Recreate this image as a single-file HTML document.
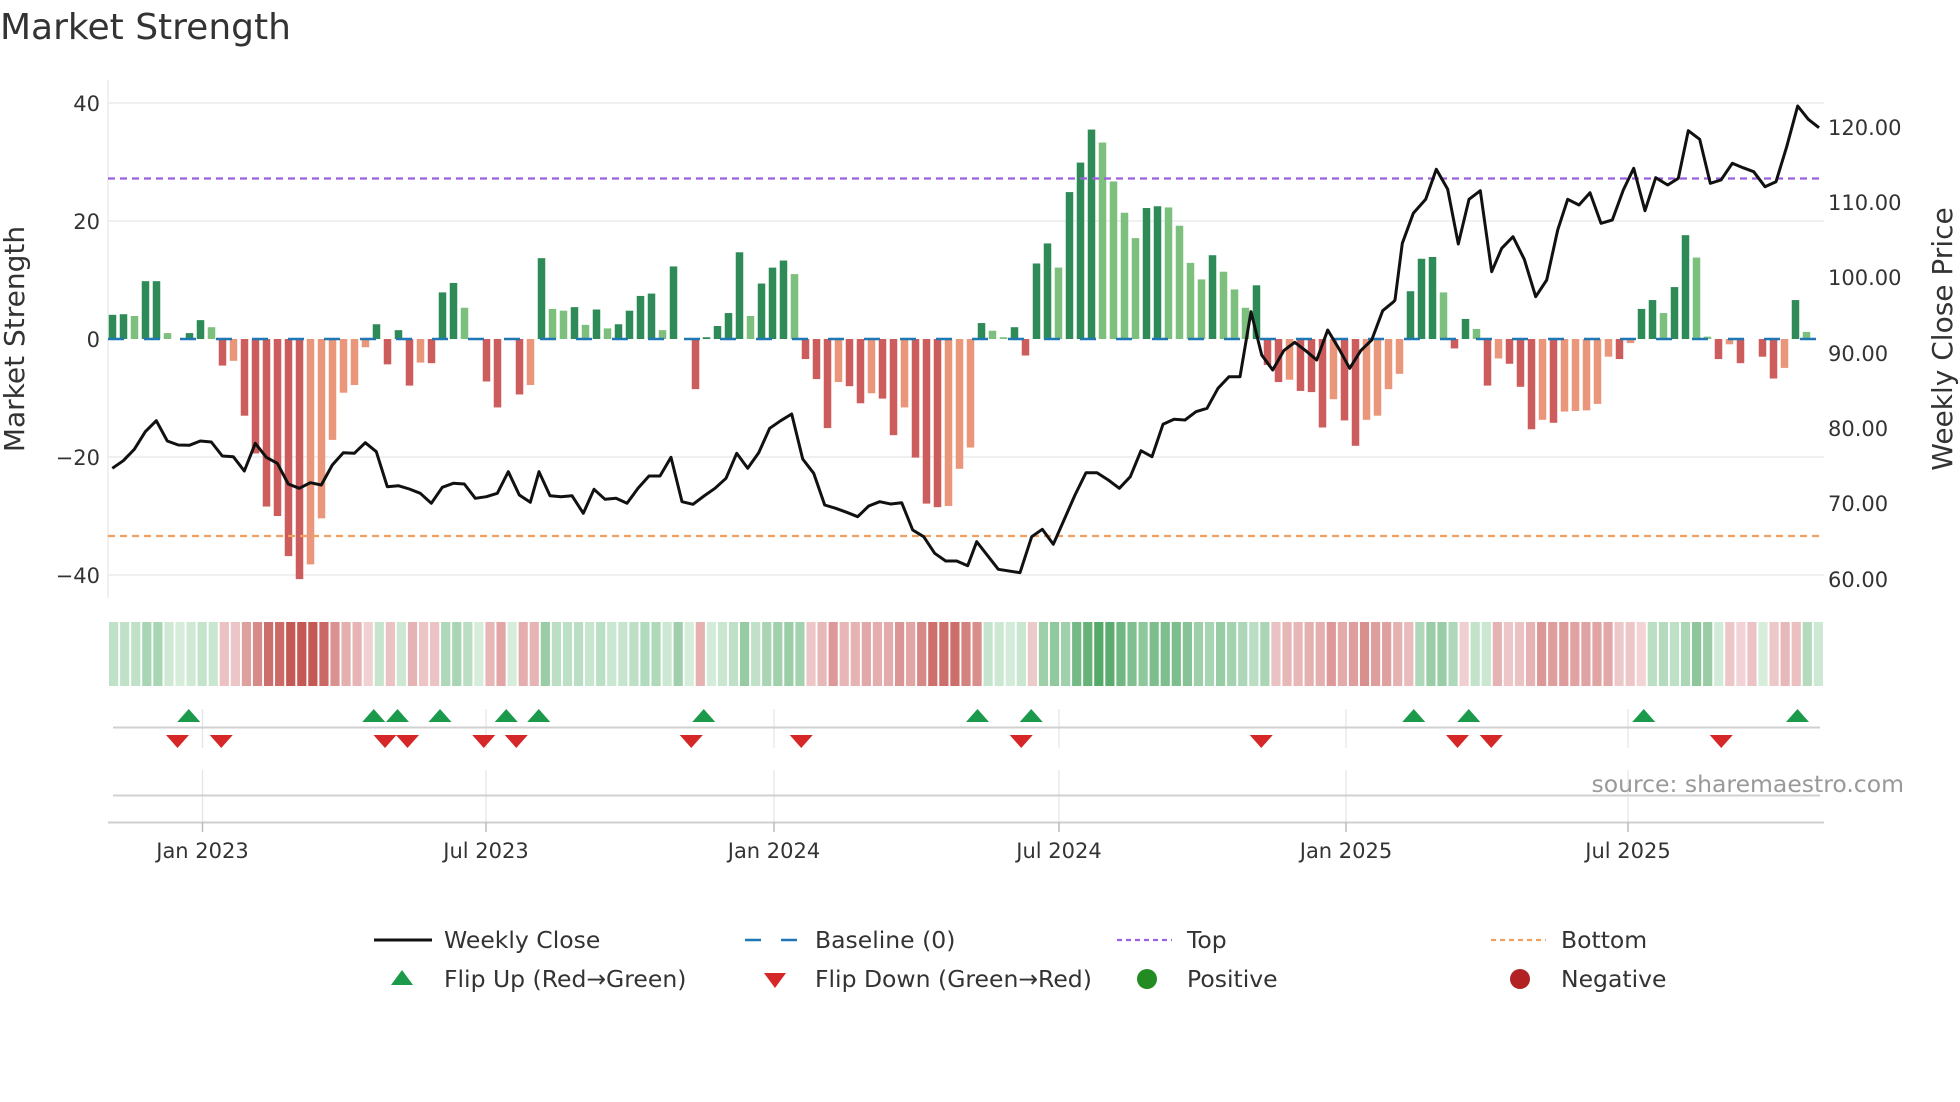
<!DOCTYPE html>
<html><head><meta charset="utf-8">
<style>
html,body{margin:0;padding:0;background:#fff;}
svg{display:block;font-family:"DejaVu Sans","Liberation Sans",sans-serif;}
</style></head>
<body>
<svg id="s" width="1960" height="1102" viewBox="0 0 1960 1102" xmlns="http://www.w3.org/2000/svg">
<rect width="1960" height="1102" fill="#fff"/>
<text x="0" y="39" font-size="36" fill="#333">Market Strength</text>
<g id="grid" stroke="#ebebeb" stroke-width="1.5">
<line x1="108" y1="103" x2="1824" y2="103"/>
<line x1="108" y1="221" x2="1824" y2="221"/>
<line x1="108" y1="457" x2="1824" y2="457"/>
<line x1="108" y1="575" x2="1824" y2="575"/>
<line x1="108" y1="80" x2="108" y2="598"/>
</g>
<g id="bars"></g>
<line x1="108" y1="339" x2="1824" y2="339" stroke="#1f77b4" stroke-width="2.5" stroke-dasharray="16,20"/>
<line x1="108" y1="178.5" x2="1824" y2="178.5" stroke="#9b5fe0" stroke-width="2.2" stroke-dasharray="7,5"/>
<line x1="108" y1="536" x2="1824" y2="536" stroke="#f0a060" stroke-width="2.2" stroke-dasharray="7,5"/>
<polyline id="price" fill="none" stroke="#111" stroke-width="3" stroke-linejoin="round"/>
<g font-size="21" fill="#333" text-anchor="end">
<text x="100" y="111">40</text><text x="100" y="229">20</text><text x="100" y="347">0</text>
<text x="100" y="465">−20</text><text x="100" y="583">−40</text>
</g>
<g font-size="21" fill="#333">
<text x="1828" y="135">120.00</text><text x="1828" y="210">110.00</text><text x="1828" y="285">100.00</text>
<text x="1828" y="361">90.00</text><text x="1828" y="436">80.00</text><text x="1828" y="511">70.00</text><text x="1828" y="587">60.00</text>
</g>
<text transform="translate(24,339) rotate(-90)" font-size="28" fill="#333" text-anchor="middle">Market Strength</text>
<text transform="translate(1952,339) rotate(-90)" font-size="28" fill="#333" text-anchor="middle">Weekly Close Price</text>
<g id="strip"></g>
<g stroke="#e4e4e4" stroke-width="1.2">
<line x1="202.5" y1="709" x2="202.5" y2="748"/><line x1="486" y1="709" x2="486" y2="748"/><line x1="774" y1="709" x2="774" y2="748"/>
<line x1="1059" y1="709" x2="1059" y2="748"/><line x1="1346" y1="709" x2="1346" y2="748"/><line x1="1628" y1="709" x2="1628" y2="748"/>
<line x1="202.5" y1="770" x2="202.5" y2="822"/><line x1="486" y1="770" x2="486" y2="822"/><line x1="774" y1="770" x2="774" y2="822"/>
<line x1="1059" y1="770" x2="1059" y2="822"/><line x1="1346" y1="770" x2="1346" y2="822"/><line x1="1628" y1="770" x2="1628" y2="822"/>
</g>
<line x1="113" y1="727.5" x2="1820" y2="727.5" stroke="#d0d0d0" stroke-width="2"/>
<line x1="113" y1="795.5" x2="1820" y2="795.5" stroke="#d0d0d0" stroke-width="2"/>
<line x1="108" y1="822.5" x2="1824" y2="822.5" stroke="#cfcfcf" stroke-width="2"/>
<g stroke="#bbb" stroke-width="1.5">
<line x1="202.5" y1="822" x2="202.5" y2="832"/><line x1="486" y1="822" x2="486" y2="832"/><line x1="774" y1="822" x2="774" y2="832"/>
<line x1="1059" y1="822" x2="1059" y2="832"/><line x1="1346" y1="822" x2="1346" y2="832"/><line x1="1628" y1="822" x2="1628" y2="832"/>
</g>
<g id="flips"></g>
<text x="1904" y="792" font-size="23.5" fill="#999" text-anchor="end">source: sharemaestro.com</text>
<g font-size="21" fill="#333" text-anchor="middle">
<text x="202.5" y="858">Jan 2023</text><text x="486" y="858">Jul 2023</text><text x="774" y="858">Jan 2024</text>
<text x="1059" y="858">Jul 2024</text><text x="1346" y="858">Jan 2025</text><text x="1628" y="858">Jul 2025</text>
</g>
<g font-size="23.5" fill="#333">
<line x1="374" y1="940" x2="432" y2="940" stroke="#111" stroke-width="3"/>
<text x="444" y="948">Weekly Close</text>
<line x1="745" y1="940" x2="800" y2="940" stroke="#1f77b4" stroke-width="2.5" stroke-dasharray="16,20"/>
<text x="815" y="948">Baseline (0)</text>
<line x1="1117" y1="940" x2="1172" y2="940" stroke="#9b5fe0" stroke-width="2.2" stroke-dasharray="5,4"/>
<text x="1187" y="948">Top</text>
<line x1="1491" y1="940" x2="1546" y2="940" stroke="#f0a060" stroke-width="2.2" stroke-dasharray="5,4"/>
<text x="1561" y="948">Bottom</text>
<polygon points="391,985 413,985 402,970" fill="#1a9a4a"/>
<text x="444" y="987">Flip Up (Red→Green)</text>
<polygon points="764,973 786,973 775,988" fill="#d62728"/>
<text x="815" y="987">Flip Down (Green→Red)</text>
<circle cx="1147" cy="979" r="10" fill="#228b22"/>
<text x="1187" y="987">Positive</text>
<circle cx="1520" cy="979" r="10" fill="#b22222"/>
<text x="1561" y="987">Negative</text>
</g>
</svg>
<script>
var NS="http://www.w3.org/2000/svg";
function el(t,a,p){var e=document.createElementNS(NS,t);for(var k in a)e.setAttribute(k,a[k]);p.appendChild(e);return e;}
var v=[4.1,4.2,3.9,9.8,9.8,1,0,1,3.2,2,-4.5,-3.7,-13,-19.4,-28.4,-30,-36.8,-40.7,-38.2,-30.4,-17.1,-9.1,-7.8,-1.4,2.5,-4.3,1.5,-7.9,-4,-4.1,7.9,9.5,5.3,0,-7.2,-11.6,0,-9.4,-7.8,13.7,
5.1,4.8,5.4,2.4,5,1.8,2.5,4.8,7.3,7.7,1.5,12.3,0,-8.5,0.3,2.2,4.4,14.7,3.9,9.4,12.1,13.3,11,-3.4,-6.8,-15.1,-7.3,-8,-10.9,-9.2,-10.1,-16.3,-11.6,-20.1,-27.9,-28.5,-28.3,-22,-18.4,
2.7,1.4,0.3,2,-2.8,12.8,16.2,12.1,24.9,29.9,35.5,33.3,26.7,21.4,17.1,22.2,22.5,22.3,19.2,12.9,10.1,14.2,11.4,8.4,5.3,9.1,-4.4,-7.3,-6.9,-8.8,-9,-15,-10.2,-13.8,-18.1,-13.7,-13,-8.5,-5.9,
8.1,13.6,13.9,7.9,-1.6,3.4,1.7,-7.9,-3.3,-4.2,-8.1,-15.3,-13.7,-14.2,-12.3,-12.2,-12.1,-11,-3,-3.4,-0.7,5.1,6.6,4.4,8.8,17.6,13.8,0.4,-3.4,-0.9,-4.1,0,-3,-6.7,-4.9,6.6,1.2];
var bars=document.getElementById('bars'),strip=document.getElementById('strip');
function mix(a,b,t){return 'rgb('+[0,1,2].map(function(i){return Math.round(a[i]+(b[i]-a[i])*t)}).join(',')+')';}
for(var k=0;k<v.length;k++){
  var x=112.5+11.0*k,val=v[k],p=k>0?v[k-1]:0;
  if(val!==0){
    var y0=339,y1=339-val*5.9,col;
    if(val>0)col=(val>=p)?'#2e8b57':'#7dbf7d';else col=(val<=p)?'#cd5c5c':'#e9967a';
    el('rect',{x:x-3.75,y:Math.min(y0,y1),width:7.5,height:Math.abs(y1-y0),fill:col},bars);
  }
  var t=Math.min(Math.abs(val)/36,1);t=Math.pow(t,0.8);
  var c=val>=0?mix([214,237,220],[84,168,104],t):mix([244,218,220],[196,88,84],t);
  el('rect',{x:108+11.07*k+1,y:622,width:9.2,height:64,fill:c},strip);
}
var Z=[[105,[22,1105,55,1082,88,1048,121,995,154,962,187,1023,220,1035,253,1036,286,1023,319,1026,352,1068,385,1070,418,1113,451,1030,484,1072,517,1090,550,1152,583,1165,616,1148,649,1155,682,1095,715,1058,748,1060,781,1028,814,1055,847,1160,880,1157,913,1167,946,1180,979,1210,1012,1162,1045,1150,1078,1152,1111,1195,1144,1190,1177,1180,1210,1115,1243,1185,1276,1207]],
[535,[12,1115,45,1187,78,1190,111,1187,145,1240,177,1168,210,1198,243,1195,276,1210,309,1165,342,1128,375,1128,408,1072,441,1205,474,1213,507,1188,540,1165,573,1135,605,1060,638,1105,671,1058,704,985,737,962,770,942,803,1077,836,1120,869,1215,902,1225,935,1237,968,1250,1001,1218,1034,1205,1067,1212,1100,1208,1133,1290,1166,1310,1199,1360,1232,1383,1265,1383,1298,1397]],
[965,[35,1325,100,1408,165,1418,200,1310,232,1288,265,1333,297,1260,330,1185,363,1118,396,1118,430,1140,463,1165,496,1130,528,1052,561,1070,594,973,627,958,660,960,693,935,726,925,759,865,792,830,825,830,858,635,890,765,923,810,956,752,989,727,1022,752,1055,780,1088,690,1121,745,1154,805,1187,752,1220,720,1253,632,1286,605]],
[1395,[0,600,22,430,55,340,92,298,124,208,158,268,190,432,222,298,256,272,290,515,320,445,354,410,388,478,422,590,455,540,488,390,518,298,552,315,585,278,618,370,652,360,685,270,716,205,750,332,782,233,818,255,850,235,880,92,914,118,946,250,978,240,1012,190,1044,203,1076,215,1110,260,1143,245,1175,140,1208,18,1240,58,1272,83]]];
var pts=[];Z.forEach(function(z){for(var i=0;i<z[1].length;i+=2)pts.push((z[0]+z[1][i]/3).toFixed(1)+','+(100+z[1][i+1]/3).toFixed(1));});
document.getElementById('price').setAttribute('points',pts.join(' '));
var fl=document.getElementById('flips');
[151,299,318,352,405,431,563,782,825,1131,1175,1315,1438].forEach(function(d){var x=d*1.25;el('polygon',{points:(x-11.5)+',722 '+(x+11.5)+',722 '+x+',709',fill:'#1a9a4a'},fl);});
[142,177,308,326,387,413,553,641,817,1009,1166,1193,1377].forEach(function(d){var x=d*1.25;el('polygon',{points:(x-11.5)+',735 '+(x+11.5)+',735 '+x+',748',fill:'#d62728'},fl);});
</script>
</body></html>
